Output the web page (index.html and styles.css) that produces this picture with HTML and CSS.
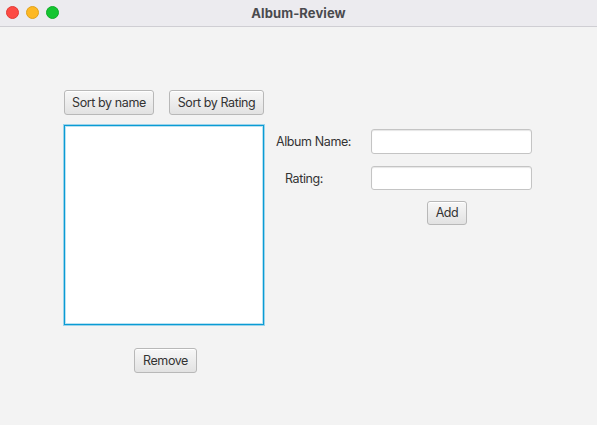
FILE: index.html
```html
<!DOCTYPE html>
<html lang="en">
<head>
<meta charset="utf-8">
<title>Album-Review</title>
<link rel="stylesheet" href="styles.css">
</head>
<body>
<div class="window">
  <div class="titlebar">
    <div class="lights">
      <span class="light red"></span>
      <span class="light yellow"></span>
      <span class="light green"></span>
    </div>
    <div class="title">Album-Review</div>
    <div></div>
  </div>
  <div class="content">
    <div class="left">
      <div class="sort-row">
        <button class="btn sort-name">Sort by name</button>
        <button class="btn sort-rating">Sort by Rating</button>
      </div>
      <div class="list"></div>
      <div class="remove-row">
        <button class="btn remove">Remove</button>
      </div>
    </div>
    <div class="form">
      <label class="lbl">Album Name:</label>
      <input class="field" type="text">
      <label class="lbl">Rating:</label>
      <input class="field" type="text">
      <div></div>
      <button class="btn add">Add</button>
    </div>
  </div>
</div>
</body>
</html>
```

FILE: styles.css
```css
* { box-sizing: border-box; }
html, body {
  margin: 0;
  padding: 0;
  width: 597px;
  height: 425px;
  overflow: hidden;
  background: #f3f3f3;
  font-family: "Inter", "Noto Sans", sans-serif;
  font-size: 12.5px;
  letter-spacing: -0.4px;
  color: #333;
}
.window {
  width: 597px;
  height: 425px;
  display: flex;
  flex-direction: column;
}
.titlebar {
  height: 27px;
  flex: none;
  background: #ecebef;
  border-bottom: 1px solid #cfced3;
  display: grid;
  grid-template-columns: 1fr auto 1fr;
  align-items: center;
}
.lights {
  display: flex;
  gap: 7px;
  padding-left: 6px;
  padding-bottom: 1px;
}
.light {
  width: 13px;
  height: 13px;
  border-radius: 50%;
  display: block;
}
.red { background: #fd4a44; border: 0.5px solid #e23a34; }
.yellow { background: #fdb823; border: 0.5px solid #e0a11a; }
.green { background: #14c531; border: 0.5px solid #10ab28; }
.title {
  font-weight: 700;
  font-size: 13px;
  color: #4a4a4e;
  padding-bottom: 1px;
  letter-spacing: 0.1px;
}
.content {
  flex: 1;
  display: flex;
  align-items: flex-start;
  padding: 63px 0 0 64px;
}
.left {
  width: 200px;
  display: flex;
  flex-direction: column;
}
.sort-row {
  display: flex;
  gap: 15px;
  height: 25px;
}
.btn {
  font-family: "Inter", "Noto Sans", sans-serif;
  font-size: 12.5px;
  letter-spacing: -0.4px;
  color: #333;
  height: 25px;
  padding: 0 8px;
  border: 1px solid #b8b8b8;
  border-radius: 3px;
  background: linear-gradient(#f7f7f7, #e2e2e2);
  box-shadow: inset 0 1px 0 #ffffff;
  line-height: 23px;
  margin: 0;
}
.sort-name { width: 90px; padding: 0; }
.sort-rating { width: 95px; padding: 0; }
.list {
  margin-top: 10px;
  width: 200px;
  height: 200px;
  background: #fff;
  border: 1px solid #0a9bd4;
  box-shadow: 0 0 0 1px #9bd3ea, inset 0 0 0 1px #b9e2f2;
}
.remove-row {
  display: flex;
  justify-content: center;
  margin-top: 23px;
  padding-left: 3px;
}
.remove { width: 63px; padding: 0; height: 25px; }
.form {
  margin-left: 12px;
  margin-top: 39px;
  display: grid;
  grid-template-columns: 95px 161px;
  grid-template-rows: 25px 24px 24px;
  row-gap: 12px;
  align-items: center;
}
.lbl {
  justify-self: start;
  color: #333;
}
.lbl:nth-of-type(2) { padding-left: 9px; }
.field {
  width: 161px;
  height: 25px;
  margin: 0;
  border: 1px solid #c4c4c4;
  border-radius: 3px;
  background: #fff;
  box-shadow: inset 0 1px 1px #e6e6e6;
  outline: none;
}
.form .field:nth-of-type(2) { height: 24px; }
.add {
  justify-self: start;
  margin-left: 56px;
  margin-top: -2px;
  width: 40px;
  height: 24px;
  padding: 0;
  line-height: 22px;
}
```
